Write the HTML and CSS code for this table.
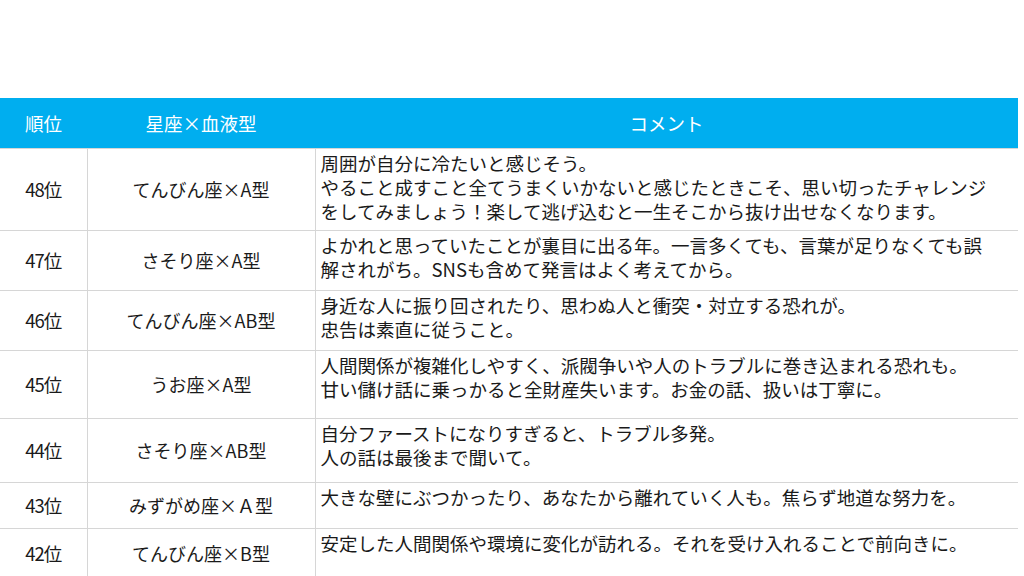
FILE: index.html
```html
<!DOCTYPE html>
<html lang="ja">
<head>
<meta charset="utf-8">
<title>ランキング</title>
<link rel="stylesheet" href="styles.css">
</head>
<body>
<table class="rank-table">
  <colgroup>
    <col class="col-rank">
    <col class="col-sign">
    <col class="col-comment">
  </colgroup>
  <thead>
    <tr class="head-row">
      <th>順位</th>
      <th>星座×血液型</th>
      <th>コメント</th>
    </tr>
  </thead>
  <tbody>
    <tr class="r48">
      <td class="rank">48位</td>
      <td class="sign">てんびん座×A型</td>
      <td class="comment">周囲が自分に冷たいと感じそう。<br>やること成すこと全てうまくいかないと感じたときこそ、思い切ったチャレンジ<br>をしてみましょう！楽して逃げ込むと一生そこから抜け出せなくなります。</td>
    </tr>
    <tr class="r47">
      <td class="rank">47位</td>
      <td class="sign">さそり座×A型</td>
      <td class="comment">よかれと思っていたことが裏目に出る年。一言多くても、言葉が足りなくても誤<br>解されがち。SNSも含めて発言はよく考えてから。</td>
    </tr>
    <tr class="r46">
      <td class="rank">46位</td>
      <td class="sign">てんびん座×AB型</td>
      <td class="comment">身近な人に振り回されたり、思わぬ人と衝突・対立する恐れが。<br>忠告は素直に従うこと。</td>
    </tr>
    <tr class="r45">
      <td class="rank">45位</td>
      <td class="sign">うお座×A型</td>
      <td class="comment">人間関係が複雑化しやすく、派閥争いや人のトラブルに巻き込まれる恐れも。<br>甘い儲け話に乗っかると全財産失います。お金の話、扱いは丁寧に。</td>
    </tr>
    <tr class="r44">
      <td class="rank">44位</td>
      <td class="sign">さそり座×AB型</td>
      <td class="comment">自分ファーストになりすぎると、トラブル多発。<br>人の話は最後まで聞いて。</td>
    </tr>
    <tr class="r43">
      <td class="rank">43位</td>
      <td class="sign">みずがめ座×Ａ型</td>
      <td class="comment">大きな壁にぶつかったり、あなたから離れていく人も。焦らず地道な努力を。</td>
    </tr>
    <tr class="r42">
      <td class="rank">42位</td>
      <td class="sign">てんびん座×B型</td>
      <td class="comment">安定した人間関係や環境に変化が訪れる。それを受け入れることで前向きに。</td>
    </tr>
  </tbody>
</table>
</body>
</html>
```
FILE: styles.css
```css
html, body {
  margin: 0;
  padding: 0;
  background: #ffffff;
}

body {
  width: 1024px;
  height: 576px;
  overflow: hidden;
  font-family: "Noto Sans CJK JP", "Noto Sans", sans-serif;
  color: #1a1a1a;
}

.rank-table {
  margin-top: 98px;
  width: 1018px;
  border-collapse: collapse;
  table-layout: fixed;
}

.col-rank { width: 87px; }
.col-sign { width: 228px; }
.col-comment { width: 703px; }

.head-row {
  height: 50px;
  background: #00aeef;
}

.head-row th {
  color: #ffffff;
  font-weight: 400;
  font-size: 18.5px;
  text-align: center;
  vertical-align: middle;
  padding: 0;
}

.rank-table td {
  border-top: 1px solid #d6d6d6;
  border-bottom: 1px solid #d6d6d6;
  padding: 0;
}

.rank-table td + td {
  border-left: 1px solid #d6d6d6;
}

.rank {
  text-align: center;
  vertical-align: middle;
  font-size: 18.5px;
  letter-spacing: -1px;
}

.sign {
  text-align: center;
  vertical-align: middle;
  font-size: 18px;
}

.comment {
  vertical-align: top;
  font-size: 18.5px;
  line-height: 24px;
  padding: 2px 0 0 5px !important;
  white-space: nowrap;
}

.r48 { height: 82px; }
.r47 { height: 60px; }
.r46 { height: 60px; }
.r45 { height: 68px; }
.r44 { height: 64px; }
.r43 { height: 46px; }
.r42 { height: 50px; }
```
